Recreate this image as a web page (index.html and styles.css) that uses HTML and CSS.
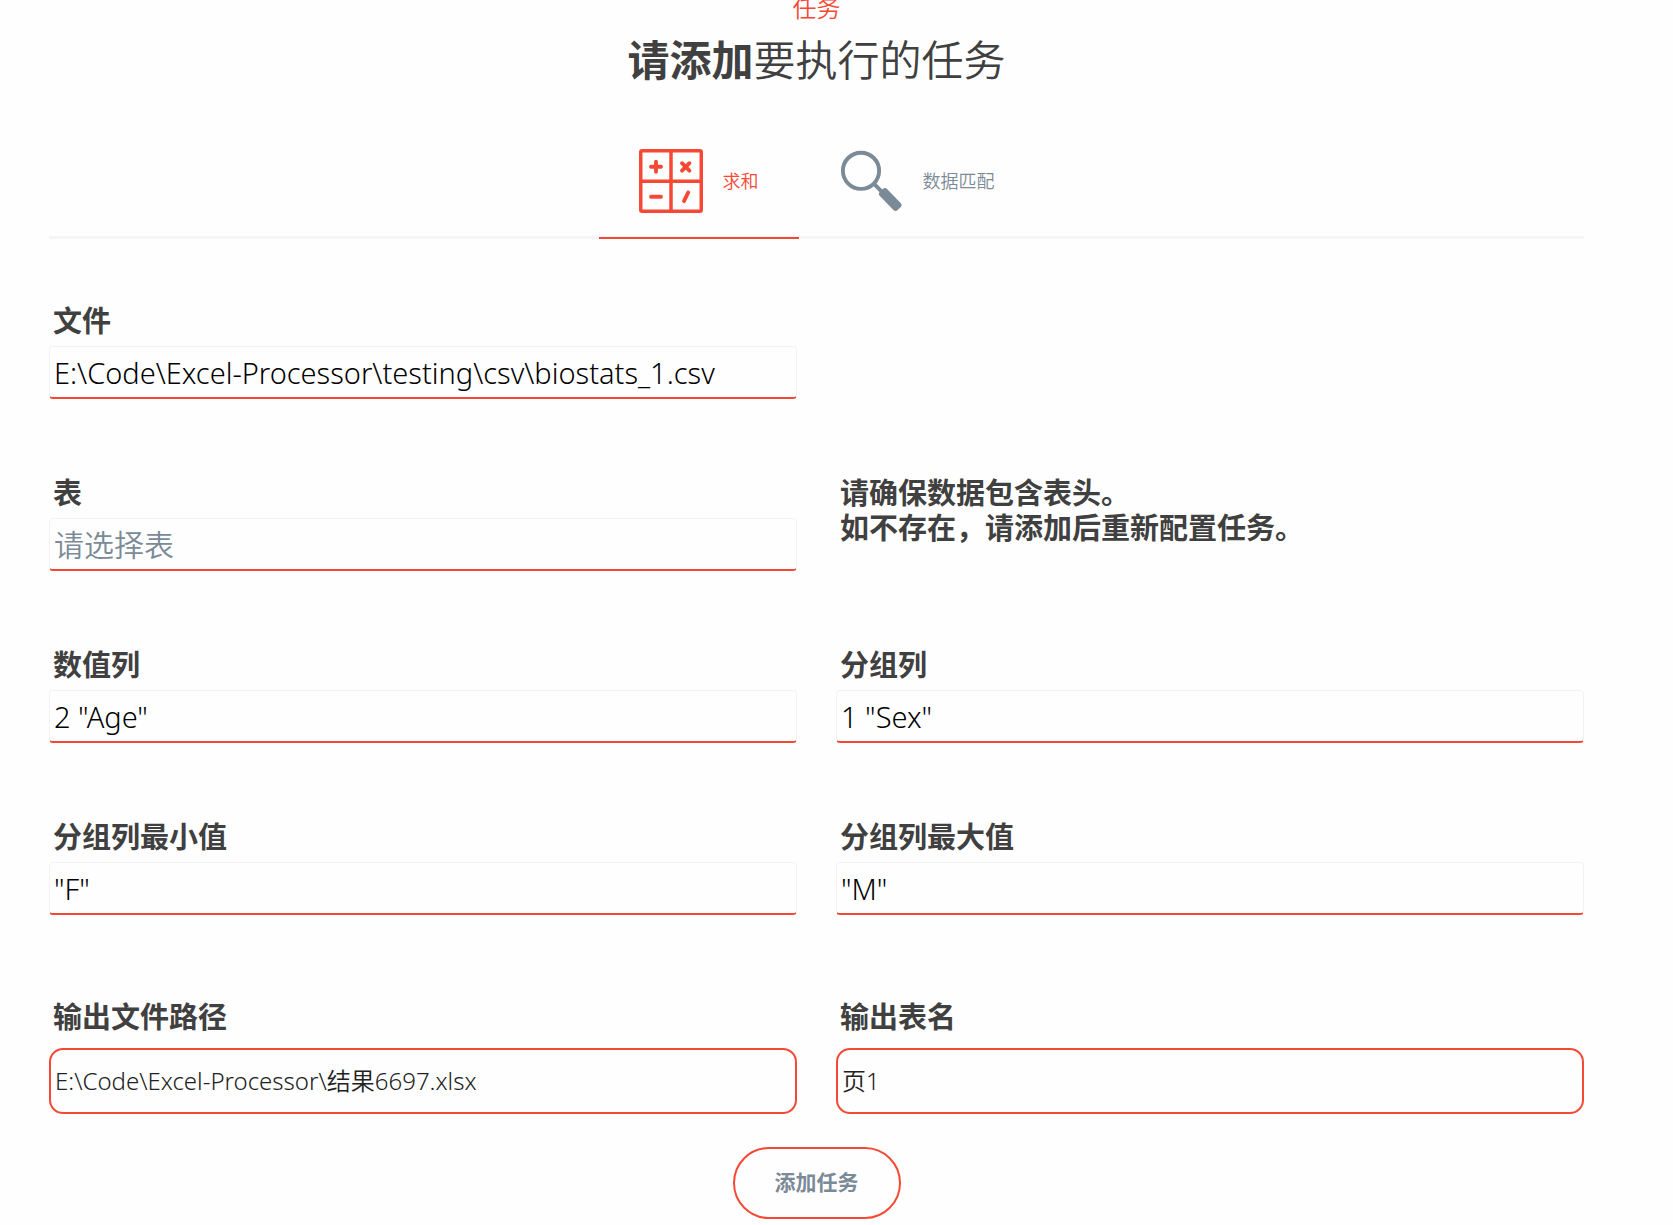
FILE: index.html
```html
<!DOCTYPE html>
<html lang="zh-CN">
<head>
<meta charset="utf-8">
<meta name="viewport" content="width=device-width, initial-scale=1">
<title>任务</title>
<link rel="stylesheet" href="styles.css">
</head>
<body>
<main class="page">
  <header class="heading">
    <p class="eyebrow">任务</p>
    <h1 class="title"><strong>请添加</strong>要执行的任务</h1>
  </header>

  <nav class="tabs">
    <a class="tab tab-active" href="#sum">
      <svg class="tab-icon" viewBox="0 0 64 64" fill="none" stroke="currentColor" stroke-width="3.5" aria-hidden="true">
        <rect x="1.75" y="1.75" width="60.5" height="60.5" rx="1.5"/>
        <path d="M32 2v60M2 32.2h60"/>
        <path stroke-width="3.9" stroke-linecap="round" d="M12 17.7h10M17 12.7v10M43 14.2l7.4 7.4M50.4 14.2L43 21.6M12 47.7h10M49.2 43.5l-4.2 8.6"/>
      </svg>
      <span>求和</span>
    </a>
    <a class="tab" href="#match">
      <svg class="tab-icon" viewBox="0 0 64 64" fill="none" stroke="currentColor" stroke-width="3.9" aria-hidden="true">
        <circle cx="22" cy="21.8" r="18.1"/>
        <path d="M34.5 34.3l8 8"/>
        <rect x="38.500" y="45.500" width="25.500" height="10" rx="3" transform="rotate(46 51.200 50.500)" fill="currentColor" stroke="none"/>
      </svg>
      <span>数据匹配</span>
    </a>
  </nav>

  <form class="form">
    <div class="field field-left">
      <label class="label" for="file">文件</label>
      <select class="control" id="file"><option>E:\Code\Excel-Processor\testing\csv\biostats_1.csv</option></select>
    </div>
    <div class="field field-left">
      <label class="label" for="sheet">表</label>
      <select class="control control-empty" id="sheet"><option>请选择表</option></select>
    </div>
    <p class="label">请确保数据包含表头。<br>如不存在，请添加后重新配置任务。</p>
    <div class="field">
      <label class="label" for="value-column">数值列</label>
      <select class="control" id="value-column"><option>2 "Age"</option></select>
    </div>
    <div class="field">
      <label class="label" for="group-column">分组列</label>
      <select class="control" id="group-column"><option>1 "Sex"</option></select>
    </div>
    <div class="field">
      <label class="label" for="group-min">分组列最小值</label>
      <input class="control" id="group-min" type="text" value="&quot;F&quot;">
    </div>
    <div class="field">
      <label class="label" for="group-max">分组列最大值</label>
      <input class="control" id="group-max" type="text" value="&quot;M&quot;">
    </div>
    <div class="field field-output">
      <label class="label" for="output-path">输出文件路径</label>
      <input class="output" id="output-path" type="text" value="E:\Code\Excel-Processor\结果6697.xlsx">
    </div>
    <div class="field field-output">
      <label class="label" for="output-sheet">输出表名</label>
      <input class="output" id="output-sheet" type="text" value="页1">
    </div>
    <button class="submit" type="button">添加任务</button>
  </form>
</main>
</body>
</html>
```
FILE: styles.css
```css
* {
  box-sizing: border-box;
}

body {
  margin: 0;
  background: #fefefe;
  color: #404040;
  font-family: "Noto Sans", "Noto Sans CJK SC", sans-serif;
  font-weight: 350;
}

p,
h1 {
  margin: 0;
}

.page {
  padding: 0 89px 4px 49px;
}

.heading {
  text-align: center;
}

.eyebrow {
  height: 24px;
  color: #f54936;
  font-size: 24px;
  line-height: 16px;
}

.title {
  font-size: 42px;
  line-height: 72px;
  font-weight: 350;
}

.title strong {
  font-weight: 700;
}

.tabs {
  display: flex;
  justify-content: center;
  margin-top: 29px;
  box-shadow: inset 0 -3px #f5f5f5;
}

.tab {
  display: flex;
  align-items: center;
  gap: 20px;
  padding: 24px 40px;
  border-bottom: 2px solid transparent;
  color: #7b8a97;
  font-size: 18px;
  line-height: 24px;
  text-decoration: none;
}

.tab-active {
  border-bottom-color: #f54936;
  color: #f54936;
}

.tab-icon {
  width: 64px;
  height: 64px;
}

.form {
  display: grid;
  grid-template-columns: 1fr 1fr;
  column-gap: 39px;
  row-gap: 76px;
  margin-top: 64px;
}

.field {
  display: flex;
  flex-direction: column;
  gap: 8px;
}

.field-left {
  grid-column: 1;
}

.form > p {
  grid-column: 2;
}

.label {
  padding-left: 4px;
  font-size: 29px;
  line-height: 35px;
  font-weight: 700;
}

.control,
.output {
  width: 100%;
  margin: 0;
  background: #fefefe;
  font-family: inherit;
  font-weight: 350;
  outline: 0;
  appearance: none;
}

.control {
  height: 53px;
  padding: 0 4px;
  border: 1px solid #f3f3f3;
  border-bottom: 2px solid #f54936;
  border-radius: 4px;
  color: #000;
  font-size: 29px;
}

.control-empty {
  color: #7b8a97;
  font-size: 30px;
}

.field-output {
  gap: 14px;
  margin-top: 8px;
}

.output {
  height: 66px;
  padding: 0 4px 4px;
  border: 2px solid #f54936;
  border-radius: 14px;
  color: #212121;
  font-size: 24px;
}

.submit {
  grid-column: 1 / -1;
  justify-self: center;
  height: 72px;
  margin-top: -43px;
  padding: 0 40px 4px;
  border: 2px solid #f54936;
  border-radius: 36px;
  background: #fefefe;
  color: #7b8a97;
  font-family: inherit;
  font-size: 21px;
  font-weight: 700;
}
```
